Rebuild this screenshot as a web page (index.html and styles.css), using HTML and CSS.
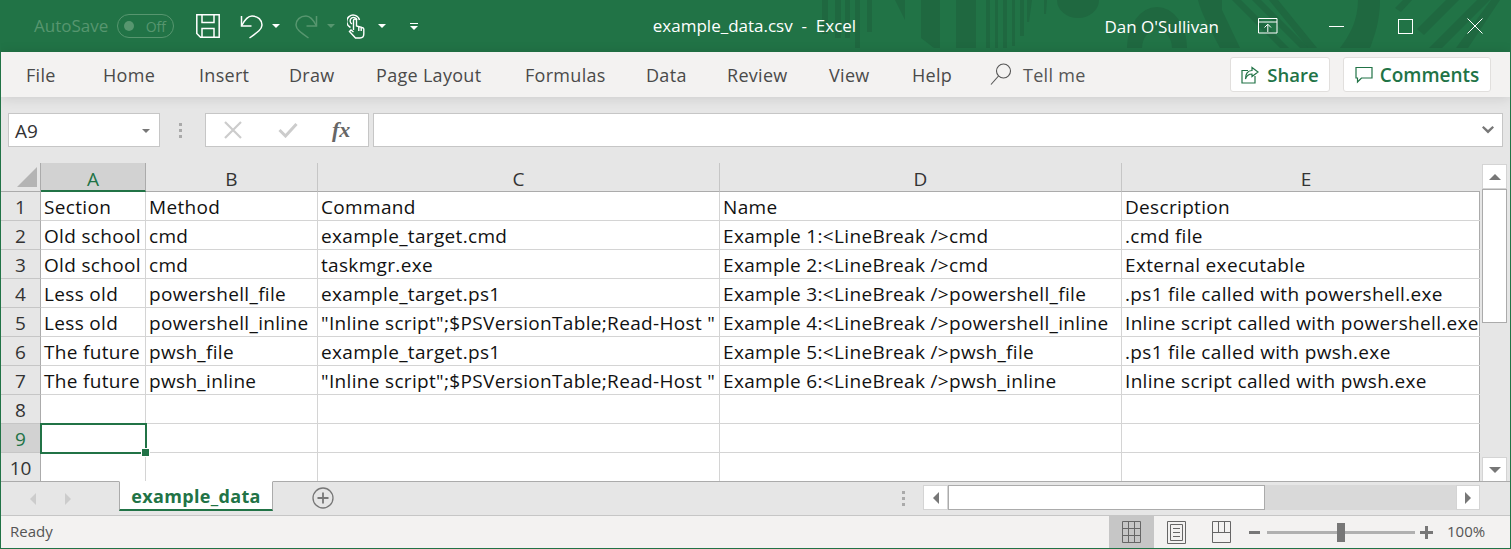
FILE: index.html
```html
<!DOCTYPE html>
<html lang="en">
<head>
<meta charset="utf-8">
<title>example_data.csv - Excel</title>
<link rel="stylesheet" href="styles.css">
</head>
<body>
<div class="app">
  <header class="titlebar">
    <svg class="pattern" width="700" height="48" viewBox="820 0 700 48" fill="#1f6840">
      <rect x="822" y="0" width="6" height="34"/><rect x="835" y="0" width="6" height="38"/><rect x="845" y="0" width="5" height="38"/><rect x="855" y="0" width="5" height="48"/><rect x="867" y="0" width="5" height="32"/>
      <path d="M895 0h10v20z"/><path d="M921 0h19v48h-6l-13-10z"/><rect x="956" y="0" width="20" height="48"/>
      <rect x="986" y="0" width="4" height="48"/><rect x="995" y="0" width="3" height="48"/><rect x="1003" y="0" width="4" height="48"/><rect x="1012" y="0" width="3" height="46"/>
      <path d="M1020 0h4v36h-4z"/><path d="M1027 0h5l-3 22h-2z"/><path d="M1044 0h3l-1 14h-2z"/>
      <path d="M1057 0h42a21 18 0 0 1-42 0z"/>
      <path fill-rule="evenodd" d="M1127 48a30 41 0 0 1 60 0h-15a15 18 0 1 0-30 0z"/>
      <path d="M1198 0h24v10l18 38h-20c-8-16-18-32-22-48z"/>
      <path d="M1232 0h9l48 48h-9z"/><path d="M1252 0h9l48 48h-9z"/><path d="M1269 0h9l39 48h-9z"/>
      <path d="M1358 0h22c0 20-5 35-10 48h-30c10-13 18-28 18-48z"/>
      <path d="M1395 8l8-8h9l-11 12z"/><path d="M1417 29l29-29h13l-35 35z"/><path d="M1442 48l48-48h-13l-48 48z"/><path d="M1468 48l32-48h-9l-35 48z"/>
    </svg>
    <div class="qat">
      <span class="autosave">AutoSave</span>
      <span class="toggle"><i class="knob"></i><span>Off</span></span>
      <svg class="ic-save" width="24" height="24" viewBox="0 0 24 24" fill="none" stroke="#fff" stroke-width="1.5"><path d="M.8.8H23.2V23.2H4.5L.8 19.5z"/><path d="M6 .8V8.5H18V.8"/><path d="M6 23.2V14.5H18V23.2"/></svg>
      <svg class="ic-undo" width="23" height="25" viewBox="0 0 23 25" fill="none" stroke="#fff" stroke-width="1.5"><path d="M1.500 2V12H11.500"/><path d="M1.500 12C5 5 8 2 12 2C18 2 22 6 22 11C22 15 18 18 9.500 24"/></svg>
      <i class="caret ca-undo"></i>
      <svg class="ic-redo" width="23" height="25" viewBox="0 0 23 25" fill="none" stroke="#57966f" stroke-width="1.5"><path d="M21.500 2V12H11.500"/><path d="M21.500 12C18 5 15 2 11 2C5 2 1 6 1 11C1 15 5 18 13.500 24"/></svg>
      <i class="caret dim ca-redo"></i>
      <svg class="ic-touch" width="18" height="25" viewBox="0 0 18 25" fill="none" stroke="#fff" stroke-width="1.400"><path d="M3.500 13.500A6.500 6.500 0 1 1 12.500 6"/><path d="M5 10A3.500 3.500 0 1 1 10 6"/><path d="M6.500 16V6.500A1.500 1.500 0 0 1 9.500 6.500V12L15 13.500A2 2 0 0 1 16.800 16V20A4 4 0 0 1 13 24H8.500L2.500 17.500L4 16L6.500 18"/><path d="M11.800 13V17M14.200 14V17"/></svg>
      <i class="caret ca-touch"></i>
      <span class="customize"><i class="bar"></i><i class="caret"></i></span>
    </div>
    <div class="doc-title">example_data.csv&nbsp; -&nbsp; Excel</div>
    <div class="win">
      <span class="user">Dan O'Sullivan</span>
      <svg class="ic-display" width="20" height="16" viewBox="0 0 20 16" fill="none" stroke="#fff"><path d="M.5.5H19V15H.5zM.5 4H19M9.800 14V6.500M6.500 9.500L9.800 6.200L13 9.500"/></svg>
      <svg class="ic-min" width="15" height="1" viewBox="0 0 15 1"><rect width="15" height="1" fill="#fff"/></svg>
      <svg class="ic-max" width="15" height="15" viewBox="0 0 15 15" fill="none" stroke="#fff"><rect x=".5" y=".5" width="14" height="14"/></svg>
      <svg class="ic-close" width="16" height="16" viewBox="0 0 16 16" fill="none" stroke="#fff"><path d="M.5.5L15.500 15.500M15.500.5L.5 15.500"/></svg>
    </div>
  </header>

  <nav class="ribbon">
    <div class="tabs">
      <span>File</span><span>Home</span><span>Insert</span><span>Draw</span><span>Page Layout</span><span>Formulas</span><span>Data</span><span>Review</span><span>View</span><span>Help</span>
      <span class="tell">
        <svg width="22" height="23" viewBox="0 0 22 23" fill="none" stroke="#555" stroke-width="1.100"><circle cx="13.500" cy="8" r="7"/><path d="M8.500 13L1 21.500"/></svg>
        Tell me
      </span>
    </div>
    <div class="actions">
      <button class="btn btn-share"><svg width="18" height="18" viewBox="0 0 18 18" fill="none" stroke="#217346" stroke-width="1.200"><path d="M11 1.500L17 6L11 10.500V8C7 8 5.500 10 4.500 13C4.500 8 6.500 4.500 11 4.500z"/><path d="M7 4.500H1V17H14V10"/></svg>Share</button>
      <button class="btn btn-comments"><svg width="18" height="18" viewBox="0 0 18 18" fill="none" stroke="#217346" stroke-width="1.200"><path d="M1 1.500H17V12H6.500L2.500 16V12H1z"/></svg>Comments</button>
    </div>
  </nav>

  <section class="formula">
    <div class="namebox"><span>A9</span><i class="caret gray"></i></div>
    <div class="dots"><i></i><i></i><i></i></div>
    <div class="fxbox">
      <svg width="18" height="18" viewBox="0 0 18 18" stroke="#ccc" stroke-width="2.200" fill="none"><path d="M1 1L17 17M17 1L1 17"/></svg>
      <svg width="20" height="16" viewBox="0 0 20 16" stroke="#ccc" stroke-width="3" fill="none"><path d="M1.500 8L7.500 14L18.500 2"/></svg>
      <span class="fx">fx</span>
    </div>
    <div class="input">
      <svg width="12" height="8" viewBox="0 0 12 8" fill="#777"><path d="M0 1.500L1.500 0L6 4L10.500 0L12 1.500L6 7.500z"/></svg>
    </div>
  </section>

  <section class="sheet">
    <div class="grid">
      <div class="corner"><i></i></div>
      <div class="ch active">A</div><div class="ch">B</div><div class="ch">C</div><div class="ch">D</div><div class="ch last">E</div>

      <div class="rh">1</div><div class="c">Section</div><div class="c">Method</div><div class="c">Command</div><div class="c">Name</div><div class="c last">Description</div>
      <div class="rh">2</div><div class="c">Old school</div><div class="c">cmd</div><div class="c">example_target.cmd</div><div class="c">Example 1:&lt;LineBreak /&gt;cmd</div><div class="c last">.cmd file</div>
      <div class="rh">3</div><div class="c">Old school</div><div class="c">cmd</div><div class="c">taskmgr.exe</div><div class="c">Example 2:&lt;LineBreak /&gt;cmd</div><div class="c last">External executable</div>
      <div class="rh">4</div><div class="c">Less old</div><div class="c">powershell_file</div><div class="c">example_target.ps1</div><div class="c">Example 3:&lt;LineBreak /&gt;powershell_file</div><div class="c last">.ps1 file called with powershell.exe</div>
      <div class="rh">5</div><div class="c">Less old</div><div class="c">powershell_inline</div><div class="c">"Inline script";$PSVersionTable;Read-Host "</div><div class="c">Example 4:&lt;LineBreak /&gt;powershell_inline</div><div class="c last">Inline script called with powershell.exe</div>
      <div class="rh">6</div><div class="c">The future</div><div class="c">pwsh_file</div><div class="c">example_target.ps1</div><div class="c">Example 5:&lt;LineBreak /&gt;pwsh_file</div><div class="c last">.ps1 file called with pwsh.exe</div>
      <div class="rh">7</div><div class="c">The future</div><div class="c">pwsh_inline</div><div class="c">"Inline script";$PSVersionTable;Read-Host "</div><div class="c">Example 6:&lt;LineBreak /&gt;pwsh_inline</div><div class="c last">Inline script called with pwsh.exe</div>
      <div class="rh">8</div><div class="c"></div><div class="c"></div><div class="c"></div><div class="c"></div><div class="c last"></div>
      <div class="rh active">9</div><div class="c selected"><i class="handle"></i></div><div class="c"></div><div class="c"></div><div class="c"></div><div class="c last"></div>
      <div class="rh end">10</div><div class="c end"></div><div class="c end"></div><div class="c end"></div><div class="c end"></div><div class="c last end"></div>
    </div>
    <aside class="vscroll">
      <div class="sbtn"><i class="tri up"></i></div>
      <div class="vthumb"></div>
      <div class="sbtn bottom"><i class="tri down"></i></div>
    </aside>
  </section>

  <section class="tabbar">
    <div class="nav"><i class="tri left light"></i><i class="tri right light"></i></div>
    <div class="sheet-tab">example_data</div>
    <svg class="add" width="22" height="22" viewBox="0 0 22 22" fill="none" stroke="#777" stroke-width="1.300"><circle cx="11" cy="11" r="10"/><path d="M11 5.500V16.500M5.500 11H16.500" stroke-width="1.800"/></svg>
    <div class="dots small"><i></i><i></i><i></i></div>
    <div class="hscroll">
      <div class="hbtn first-btn"><i class="tri left"></i></div>
      <div class="hthumb"></div>
      <div class="hbtn end-btn"><i class="tri right"></i></div>
    </div>
  </section>

  <footer class="status">
    <span class="ready">Ready</span>
    <div class="views">
      <div class="view on"><svg width="19" height="22" viewBox="0 0 19 22" fill="none" stroke="#666"><path d="M.5.500H18.500V21.500H.5zM6.500.5V21.500M12.500.5V21.500M.5 7.500H18.500M.5 14.500H18.500"/></svg></div>
      <div class="view"><svg width="19" height="23" viewBox="0 0 19 23" fill="none" stroke="#666"><path d="M.5.500H18.500V22.500H.5zM3.500 3.500H15.500V19.500H3.500zM6 7.500H13M6 11.500H13M6 15.500H13"/></svg></div>
      <div class="view"><svg width="19" height="22" viewBox="0 0 19 22" fill="none" stroke="#666"><path d="M.5.500H18.500V21.500H.5zM.5 11.500H18.500M6.500.5V11.500M12.500.5V11.500" /></svg></div>
    </div>
    <div class="zoom">
      <i class="zminus"></i>
      <div class="slider"><i class="sthumb"></i></div>
      <i class="zplus"></i>
      <span class="pct">100%</span>
    </div>
  </footer>
</div>
</body>
</html>
```

FILE: styles.css
```css
* { box-sizing: border-box; }
html, body { margin: 0; padding: 0; }
body { font-family: "Open Sans", "Noto Sans", sans-serif; background: #e6e6e6; overflow: hidden; }
i { display: block; font-style: normal; }

.app {
  width: 1511px; height: 549px; display: flex; flex-direction: column;
  border: 1px solid #217346; border-top: 0;
  position: relative; overflow: hidden;
}

/* Title bar */
.titlebar {
  height: 52px; margin: 0 -1px; background: #217346; color: #fff;
  display: grid; grid-template-columns: 1fr auto 1fr; align-items: center;
  position: relative; flex: none;
}
.pattern { position: absolute; left: 820px; top: 0; }
.qat { display: flex; align-items: center; padding-left: 34px; position: relative; }
.autosave { font-size: 17px; color: #57966f; width: 83px; white-space: nowrap; padding-bottom: 2px; }
.toggle {
  width: 57px; height: 24px; border: 1px solid #57966f; border-radius: 12px;
  display: flex; align-items: center; justify-content: space-between;
  padding: 0 7px 0 6px; font-size: 14px; color: #57966f;
}
.knob { width: 10px; height: 10px; border-radius: 50%; background: #57966f; }
.ic-save { margin-left: 22px; }
.ic-undo { margin-left: 20px; }
.caret { width: 0; height: 0; border: 4px solid transparent; border-top-color: #fff; border-bottom: 0; }
.caret.dim { border-top-color: #57966f; }
.caret.gray { border-top-color: #777; }
.ca-undo { margin-left: 9px; }
.ic-redo { margin-left: 15px; }
.ca-redo { margin-left: 9px; }
.ic-touch { margin-left: 12px; }
.ca-touch { margin-left: 13px; }
.customize { margin-left: 24px; display: flex; flex-direction: column; align-items: center; gap: 2px; }
.bar { width: 8px; height: 1px; background: #fff; }
.doc-title { font-size: 17px; position: relative; white-space: nowrap; left: -1px; padding-bottom: 2px; }
.win { display: flex; align-items: center; justify-content: flex-end; position: relative; padding-right: 28px; }
.user { font-size: 17px; margin-right: 39px; white-space: nowrap; }
.ic-min { margin-left: 51px; }
.ic-max { margin-left: 54px; }
.ic-close { margin-left: 54px; }

/* Ribbon */
.ribbon {
  height: 45px; background: #f3f2f1; display: flex; justify-content: space-between; align-items: center;
  flex: none; box-shadow: 0 1px 12px rgba(0,0,0,.12); position: relative; padding-right: 19px;
}
.tabs {
  display: grid; grid-template-columns: 77px 96px 90px 87px 149px 121px 81px 102px 83px 78px auto;
  padding-left: 25px; font-size: 18px; letter-spacing: .3px; color: #4a4a4a; white-space: nowrap; align-items: center;
}
.tell { display: flex; align-items: center; gap: 11px; color: #555; }
.actions { display: flex; gap: 13px; }
.btn {
  height: 35px; background: #fff; border: 1px solid #e1dfdd; border-radius: 3px;
  display: flex; align-items: center; gap: 8px; padding: 0; justify-content: center;
  font: 600 18.500px "Open Sans", sans-serif; color: #217346;
}
.btn-share { width: 100px; }
.btn-comments { width: 148px; font-size: 19px; gap: 7px; }

/* Formula bar */
.formula { height: 66px; flex: none; display: flex; padding: 16px 7px 16px 7px; align-items: stretch; }
.namebox {
  width: 152px; background: #fff; border: 1px solid #c6c6c6; display: flex; align-items: center;
  justify-content: space-between; padding: 2px 9px 0 6px; font-size: 19px; color: #333;
}
.dots { display: flex; flex-direction: column; justify-content: center; gap: 3px; margin: 0 23px 0 19px; }
.dots i { width: 3px; height: 3px; background: #aaa; }
.fxbox {
  width: 164px; background: #fff; border: 1px solid #c6c6c6; display: flex; align-items: center;
  gap: 36px; padding-left: 18px; margin-right: 4px;
}
.fx { font: italic 700 22px "Liberation Serif", serif; color: #666; margin-left: -2px; }
.input {
  flex: 1; background: #fff; border: 1px solid #c6c6c6; display: flex; align-items: center;
  justify-content: flex-end; padding-right: 8px;
}

/* Sheet */
.sheet { flex: none; height: 319px; display: flex; }
.grid {
  width: 1479px; display: grid;
  grid-template-columns: 40px 105px 172px 402px 402px 358px;
  grid-template-rows: 29px repeat(10, 29px);
  background: #fff; font-size: 19px; letter-spacing: .33px; color: #111;
  border-right: 1px solid #ababab;
  align-self: flex-start;
}
.corner {
  background: #e6e6e6; border-right: 1px solid #ababab; border-bottom: 1px solid #ababab;
  display: flex; justify-content: flex-end; align-items: flex-end; padding: 0 3px 4px 0;
}
.corner i { width: 0; height: 0; border-left: 20px solid transparent; border-bottom: 20px solid #b4b4b4; }
.ch {
  background: #e6e6e6; border-right: 1px solid #c6c6c6; border-bottom: 1px solid #ababab;
  text-align: center; line-height: 32px; font-size: 19px; color: #333; letter-spacing: 0;
}
.ch.last { border-right: 0; padding-left: 10px; }
.ch.active { background: #d2d2d2; color: #217346; border-bottom: 2px solid #217346; border-right-color: #ababab; }
.rh {
  background: #e6e6e6; border-right: 1px solid #ababab; border-bottom: 1px solid #c6c6c6;
  text-align: center; line-height: 30px; font-size: 19px; color: #333; letter-spacing: 0;
}
.rh.active { background: #d2d2d2; color: #217346; }
.c {
  border-right: 1px solid #d4d4d4; border-bottom: 1px solid #d4d4d4;
  padding-left: 3px; line-height: 30px; white-space: nowrap; overflow: hidden; position: relative;
}
.c.last { border-right: 0; }
.rh.end, .c.end { border-bottom: 0; }
.selected {
  overflow: visible; border-color: #217346; z-index: 1;
  box-shadow: 0 0 0 1px #217346, inset 1px 1px 0 #217346;
}
.handle {
  position: absolute; right: -4px; bottom: -4px; width: 7px; height: 7px; background: #217346;
  border: 1px solid #fff; box-sizing: content-box; margin: -1px;
}
.vscroll {
  flex: 1; display: flex; flex-direction: column; padding: 1px 3px 0 2px;
}
.sbtn { height: 25px; background: #fff; border: 1px solid #d4d4d4; display: flex; align-items: center; justify-content: center; flex: none; }
.sbtn.bottom { margin-top: auto; }
.vthumb { height: 134px; background: #fff; border: 1px solid #ababab; flex: none; }
.tri { width: 0; height: 0; border: 5px solid transparent; }
.tri.up { border-top: 0; border-left-width: 6px; border-right-width: 6px; border-bottom: 6px solid #777; }
.tri.down { border-bottom: 0; border-left-width: 6px; border-right-width: 6px; border-top: 6px solid #777; }
.tri.left { border-left: 0; border-top-width: 6px; border-bottom-width: 6px; border-right: 6px solid #777; }
.tri.right { border-right: 0; border-top-width: 6px; border-bottom-width: 6px; border-left: 6px solid #777; }
.tri.light { border-right-color: #ccc; border-left-color: #ccc; }

/* Sheet tabs */
.tabbar {
  height: 35px; flex: none; display: flex; align-items: flex-start;
  border-top: 1px solid #ababab; border-bottom: 1px solid #c6c6c6; margin-top: -1px; position: relative;
}
.nav { width: 118px; height: 100%; display: flex; align-items: center; gap: 29px; padding-left: 29px; }
.sheet-tab {
  width: 154px; height: 30px; margin-top: -1px; background: #fff; color: #217346;
  border-left: 1px solid #ababab; border-right: 1px solid #ababab; border-bottom: 2px solid #217346;
  font-weight: 700; font-size: 18px; letter-spacing: .35px; text-align: center; line-height: 29px; border-top: 1px solid #fff;
}
.add { margin: 5px 0 0 39px; flex: none; }
.dots.small { margin: 6px 18px 0 568px; height: 20px; }
.hscroll { display: flex; width: 557px; height: 25px; margin-top: 3px; background: #d9d9d9; }
.hbtn { width: 24px; background: #fff; border: 1px solid #d4d4d4; display: flex; align-items: center; justify-content: center; flex: none; }
.hbtn.first-btn { width: 25px; }
.hbtn.end-btn { margin-left: auto; }
.hthumb { width: 317px; background: #fff; border: 1px solid #ababab; flex: none; }

/* Status bar */
.status {
  flex: 1; background: #f3f2f1; display: flex; align-items: center; position: relative;
}
.ready { font-size: 15px; color: #555; padding: 0 0 2px 9px; width: 1108px; }
.views { display: flex; align-self: stretch; }
.view { width: 45px; display: flex; align-items: center; justify-content: center; }
.view.on { background: #c6c6c6; }
.zoom { display: flex; align-items: center; margin-left: 5px; }
.zminus { width: 11px; height: 3px; background: #777; }
.slider { width: 148px; height: 3px; background: #b0b0b0; margin: 0 5px 0 7px; position: relative; }
.sthumb { position: absolute; left: 70px; top: -8px; width: 8px; height: 19px; background: #777; }
.zplus { width: 13px; height: 13px; position: relative; background: linear-gradient(#777,#777) center/13px 3px no-repeat, linear-gradient(#777,#777) center/3px 13px no-repeat; }
.pct { font-size: 15px; color: #555; margin-left: 14px; padding-bottom: 2px; }
```
